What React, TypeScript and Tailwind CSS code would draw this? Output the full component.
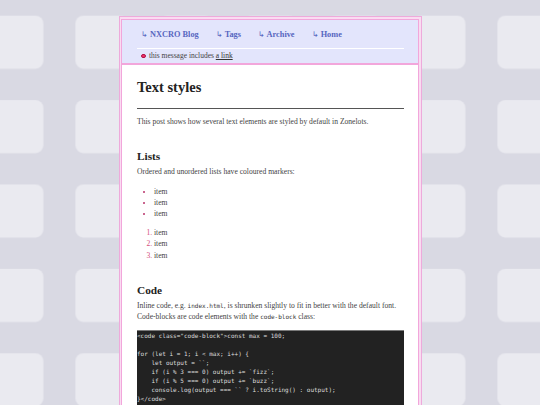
import React from "react";

const navLinks = ["NXCRO Blog", "Tags", "Archive", "Home"];

const codeBlock = `<code class="code-block">const max = 100;

for (let i = 1; i < max; i++) {
    let output = \`\`;
    if (i % 3 === 0) output += \`fizz\`;
    if (i % 5 === 0) output += \`buzz\`;
    console.log(output === \`\` ? i.toString() : output);
}</code>`;

function TileBackground() {
  return (
    <svg className="absolute inset-0 h-full w-full" aria-hidden="true">
      <defs>
        <pattern id="tiles" x="-9" y="15.7" width="84.4" height="84.4" patternUnits="userSpaceOnUse">
          <rect x="0" y="0" width="52.4" height="53" rx="8" fill="#eaeaf0" />
        </pattern>
      </defs>
      <rect width="100%" height="100%" fill="url(#tiles)" />
    </svg>
  );
}

function Header() {
  return (
    <header className="border-b-2 border-[#f2a6db] bg-[#e3e5fc] pt-[9px] pr-[14px] pb-[1.5px] pl-[15px]">
      <nav className="flex h-[12px] items-center gap-[17px] pl-[4px] text-[8.3px] leading-[12px] font-bold text-[#5766c0]">
        {navLinks.map((link) => (
          <a key={link} className="whitespace-nowrap">
            <span className="font-normal">↳</span> {link}
          </a>
        ))}
      </nav>
      <div className="mt-[7px] h-px bg-white" />
      <p className="mt-[2.5px] flex h-[10px] items-center gap-[3px] pl-[4.4px] text-[7.5px] leading-[10px] text-[#444]">
        <span className="inline-block h-[4.5px] w-[4.5px] rounded-full border border-[#b0124a] bg-[#ee3366]" />
        <span>
          this message includes <a className="text-[#333] underline">a link</a>
        </span>
      </p>
    </header>
  );
}

function InlineCode({ children }: { children: React.ReactNode }) {
  return <code className="font-['DejaVu_Sans_Mono',monospace] text-[6px] leading-none text-[#333]">{children}</code>;
}

function Article() {
  return (
    <article className="pt-[13px] pr-[14px] pl-[15px] text-[7.6px] leading-[11.6px] text-[#444]">
      <h1 className="text-[14.5px] leading-[18px] font-bold text-[#222]">Text styles</h1>
      <hr className="mt-[12.7px] border-t border-[#555]" />
      <p className="mt-[6.5px]">This post shows how several text elements are styled by default in Zonelots.</p>

      <h2 className="mt-[21.6px] text-[11.3px] leading-[14px] font-bold text-[#222]">Lists</h2>
      <p className="mt-[3.3px]">Ordered and unordered lists have coloured markers:</p>
      <ul className="mt-[7.9px] list-disc pl-[17px] leading-[11.2px] marker:text-[#b8336a]">
        <li>item</li>
        <li>item</li>
        <li>item</li>
      </ul>
      <ol className="mt-[7.6px] list-decimal pl-[17px] leading-[11.5px] marker:text-[#d4507a]">
        <li>item</li>
        <li>item</li>
        <li>item</li>
      </ol>

      <h2 className="mt-[21.5px] text-[11.3px] leading-[14px] font-bold text-[#222]">Code</h2>
      <p className="mt-[3px]">
        Inline code, e.g. <InlineCode>index.html</InlineCode>, is shrunken slightly to fit in better with the default
        font. Code-blocks are code elements with the <InlineCode>code-block</InlineCode> class:
      </p>
      <pre className="mt-[6.9px] overflow-hidden border-t border-[#7a7a7a] bg-[#222] pb-[3px] font-['DejaVu_Sans_Mono',monospace] text-[6px] leading-[9.05px] text-[#ddd]">
        {codeBlock}
      </pre>
    </article>
  );
}

export default function App() {
  return (
    <div className="relative h-[405px] overflow-hidden bg-[#d9d9e3] font-['Liberation_Serif','Times_New_Roman',serif]">
      <TileBackground />
      <div className="relative mx-auto mt-[16px] w-[303px] border border-[#eeaadb] bg-[#f9dcf1] p-[1.5px]">
        <div className="border-[1.5px] border-[#f2a6db] bg-white">
          <Header />
          <Article />
        </div>
      </div>
    </div>
  );
}
